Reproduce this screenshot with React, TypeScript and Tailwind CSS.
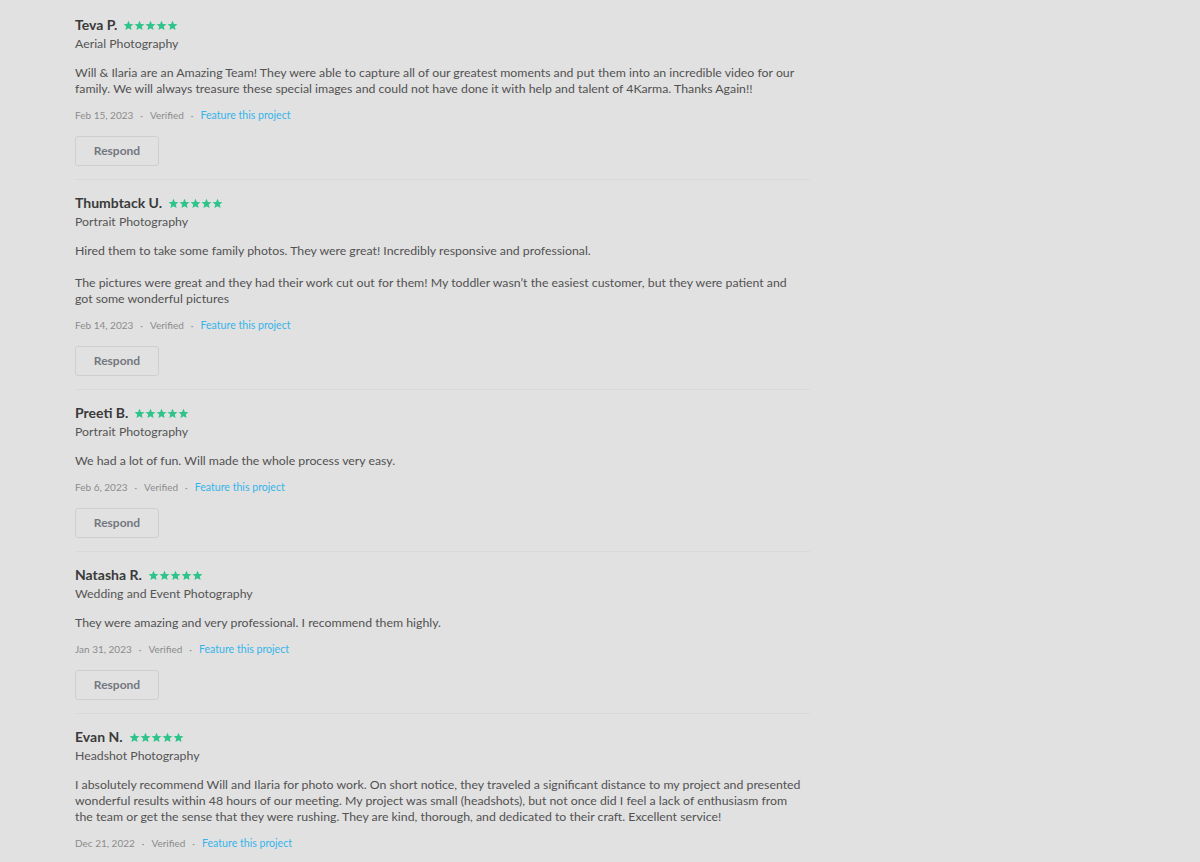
const reviews = [
  {
    name: 'Teva P.',
    category: 'Aerial Photography',
    body: [
      'Will & Ilaria are an Amazing Team! They were able to capture all of our greatest moments and put them into an incredible video for our family. We will always treasure these special images and could not have done it with help and talent of 4Karma. Thanks Again!!',
    ],
    date: 'Feb 15, 2023',
  },
  {
    name: 'Thumbtack U.',
    category: 'Portrait Photography',
    body: [
      'Hired them to take some family photos. They were great! Incredibly responsive and professional.',
      'The pictures were great and they had their work cut out for them! My toddler wasn’t the easiest customer, but they were patient and got some wonderful pictures',
    ],
    date: 'Feb 14, 2023',
  },
  {
    name: 'Preeti B.',
    category: 'Portrait Photography',
    body: ['We had a lot of fun. Will made the whole process very easy.'],
    date: 'Feb 6, 2023',
  },
  {
    name: 'Natasha R.',
    category: 'Wedding and Event Photography',
    body: ['They were amazing and very professional. I recommend them highly.'],
    date: 'Jan 31, 2023',
  },
  {
    name: 'Evan N.',
    category: 'Headshot Photography',
    body: [
      'I absolutely recommend Will and Ilaria for photo work. On short notice, they traveled a significant distance to my project and presented wonderful results within 48 hours of our meeting. My project was small (headshots), but not once did I feel a lack of enthusiasm from the team or get the sense that they were rushing. They are kind, thorough, and dedicated to their craft. Excellent service!',
    ],
    date: 'Dec 21, 2022',
    last: true,
  },
];

function Stars() {
  return (
    <div className="flex items-center">
      {[0, 1, 2, 3, 4].map((i) => (
        <svg key={i} viewBox="0 0 24 24" className="w-[11px] h-[11px]" fill="#2dc48a">
          <path d="M12 1.5l3.1 7.1 7.7.6-5.9 5.1 1.8 7.6L12 17.9l-6.7 4 1.8-7.6-5.9-5.1 7.7-.6z" />
        </svg>
      ))}
    </div>
  );
}

function Review({ r, first }: { r: (typeof reviews)[number]; first: boolean }) {
  return (
    <div className={first ? 'pt-[15px]' : 'pt-[13px] border-t border-[#d9d9d9]'}>
      <div className="flex items-center gap-[6px]">
        <span className="text-[14px] leading-[20px] font-bold text-[#3a3a3a]">{r.name}</span>
        <Stars />
      </div>
      <div className="text-[12.3px] leading-[18px] text-[#555]">{r.category}</div>

      <div className="mt-[12px] w-[727px] space-y-[16px]">
        {r.body.map((p, i) => (
          <p key={i} className="text-[12.3px] leading-[16px] text-[#525252]">
            {p}
          </p>
        ))}
      </div>

      {/* meta row */}
      <div className="mt-[10px] flex items-center text-[10px] leading-[16px] text-[#8c8c8c]">
        <span>{r.date}</span>
        <span className="mx-[7px]">·</span>
        <span>Verified</span>
        <span className="mx-[7px]">·</span>
        <span className="text-[10.6px] text-[#35b4ea]">Feature this project</span>
      </div>

      {!r.last && (
        <div className="pb-[13px]">
          <button className="mt-[13px] w-[84px] h-[30px] rounded-[3px] border border-[#cfcfcf] text-[12px] font-bold text-[#737880]">
            Respond
          </button>
        </div>
      )}
    </div>
  );
}

export default function App() {
  return (
    <div
      className="min-h-[862px] bg-[#e1e1e1] pl-[75px]"
      style={{ fontFamily: 'Lato, "Open Sans", sans-serif' }}
    >
      <div className="w-[735px]">
        {reviews.map((r, i) => (
          <Review key={i} r={r} first={i === 0} />
        ))}
      </div>
    </div>
  );
}
